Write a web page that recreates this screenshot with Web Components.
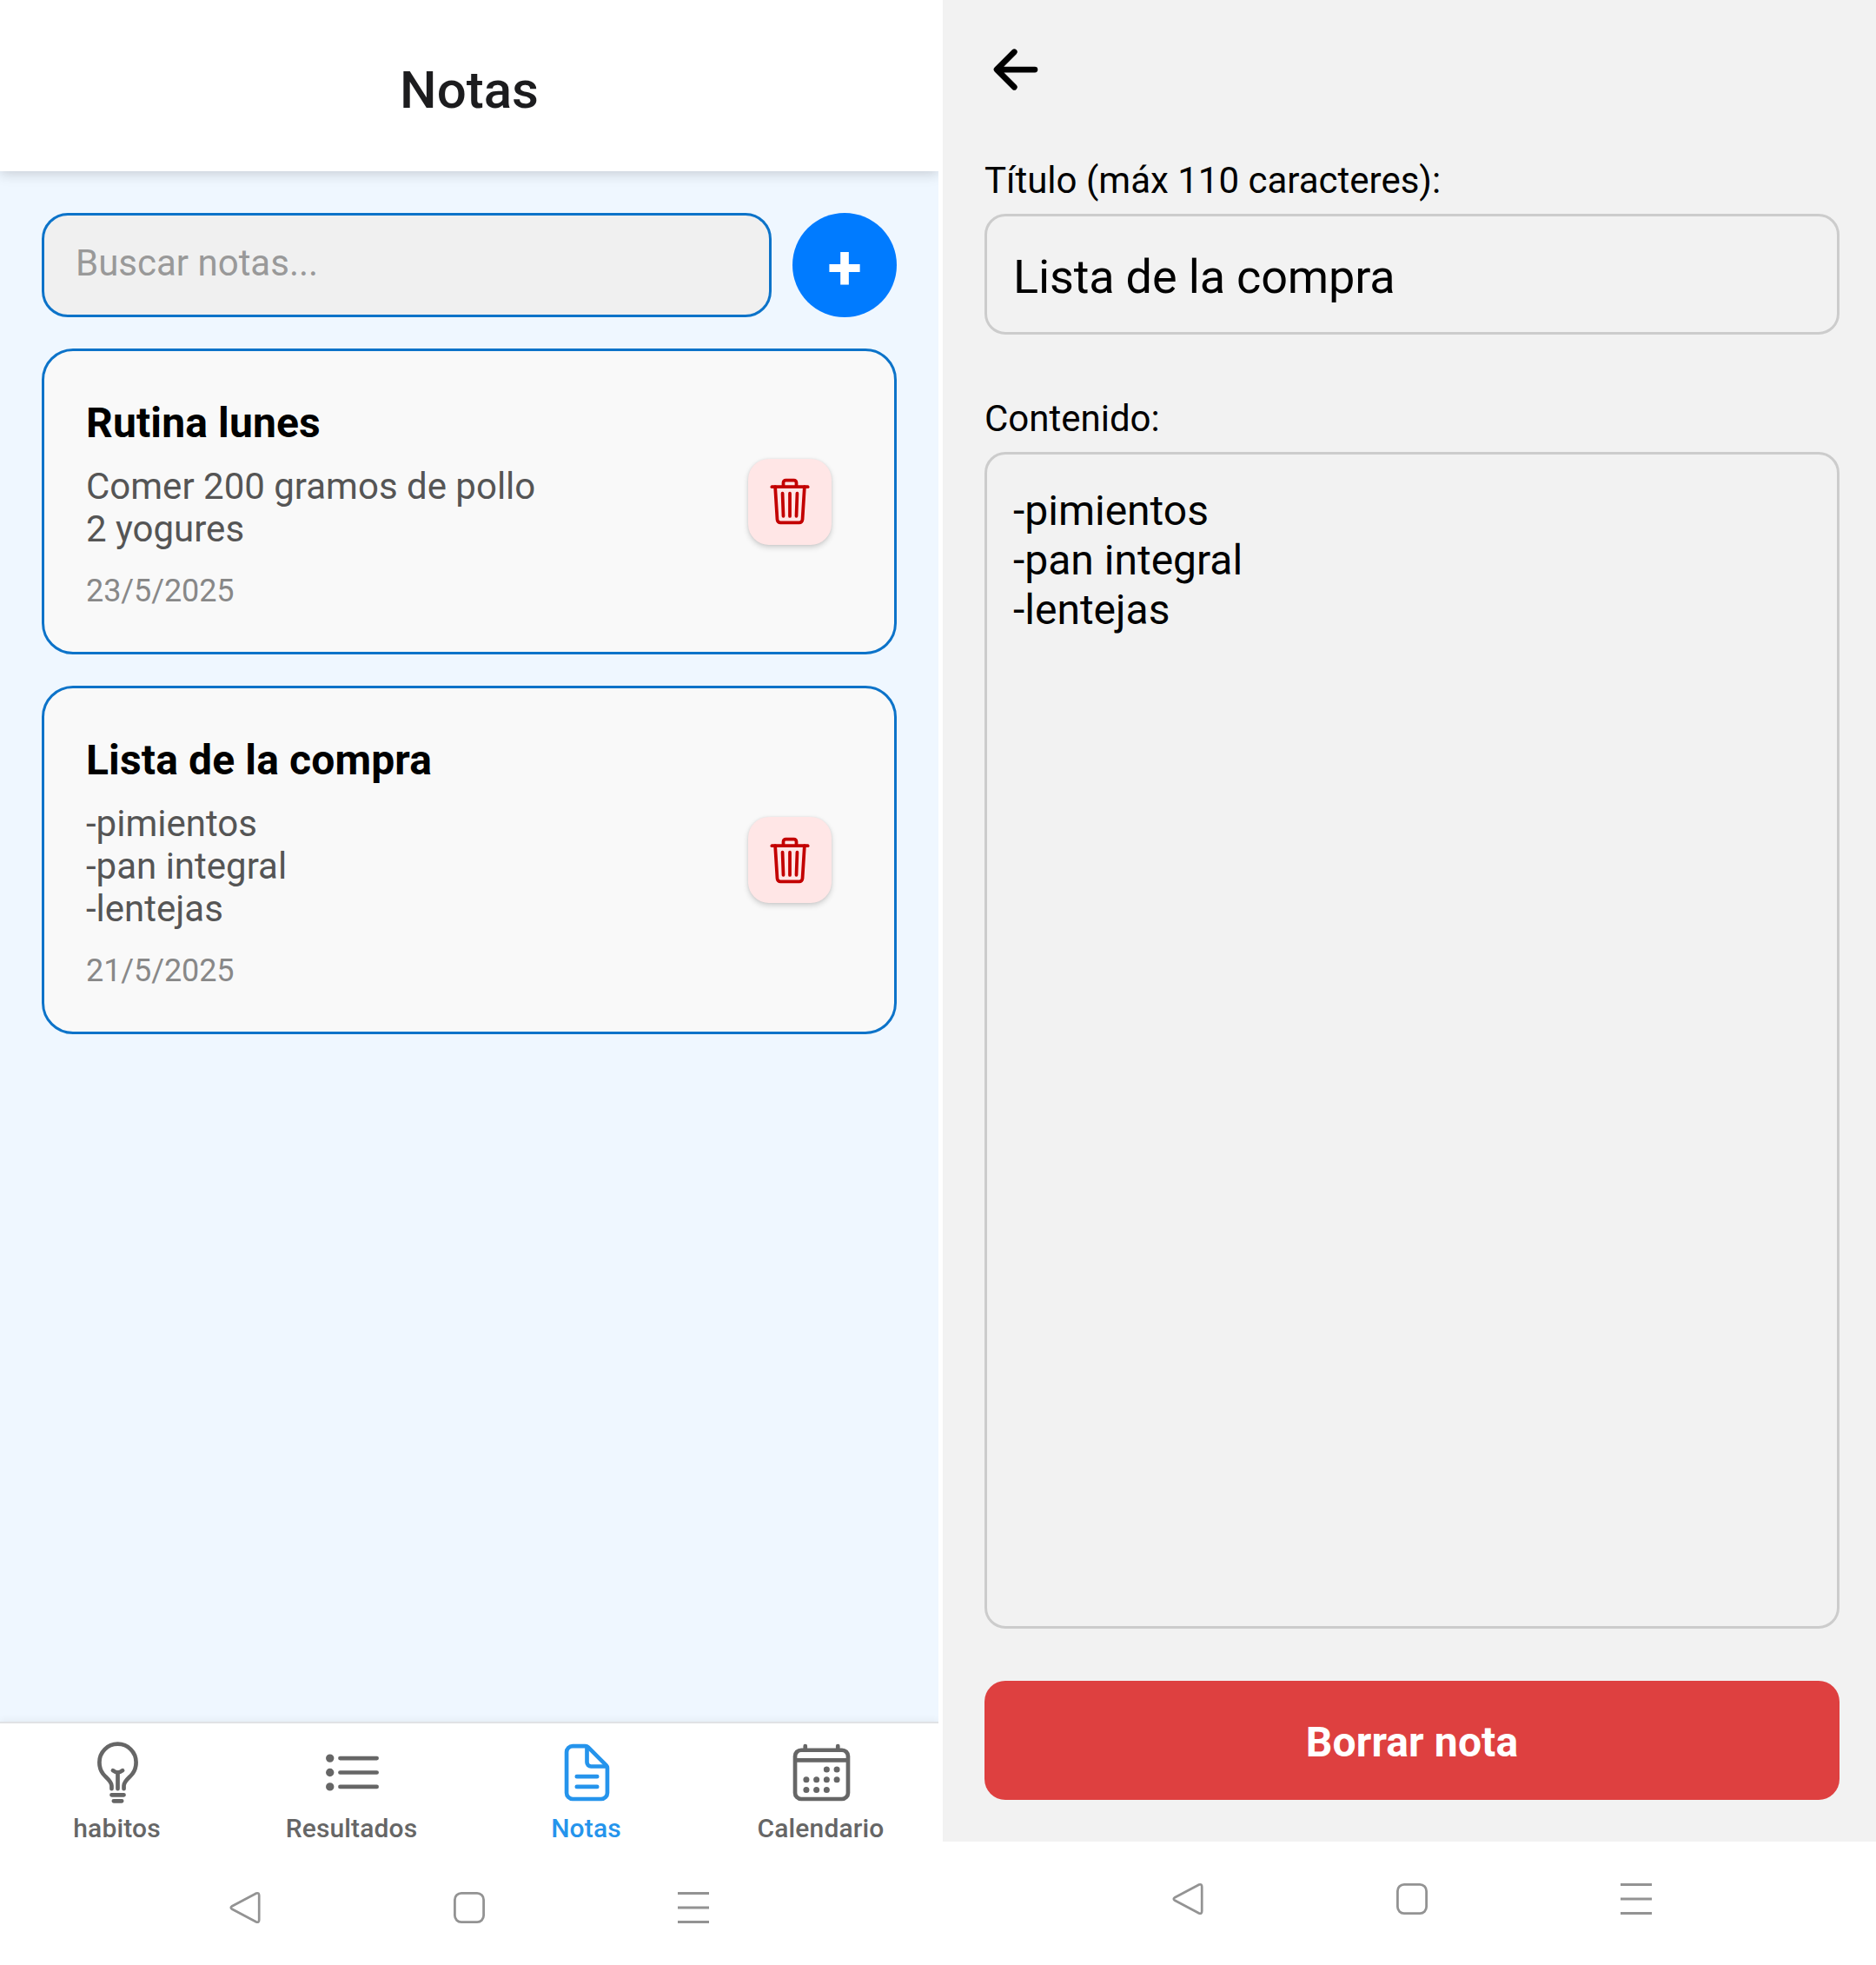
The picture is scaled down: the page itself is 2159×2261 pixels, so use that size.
<!DOCTYPE html>
<html lang="es">
<head>
<meta charset="utf-8">
<title>Notas</title>
<style>
  html, body { margin: 0; padding: 0; background: #fff; }
  body { font-family: Roboto, "Liberation Sans", sans-serif; width: 2159px; height: 2261px; overflow: hidden; }
  .screens { display: flex; gap: 5px; height: 2261px; }
</style>
</head>
<body>
<div class="screens">
  <notes-screen heading="Notas">
    <search-row placeholder="Buscar notas..."></search-row>
    <note-card heading="Rutina lunes" date="23/5/2025">Comer 200 gramos de pollo
2 yogures</note-card>
    <note-card heading="Lista de la compra" date="21/5/2025">-pimientos
-pan integral
-lentejas</note-card>
    <tab-bar slot="tabs">
      <tab-item icon="bulb">habitos</tab-item>
      <tab-item icon="list">Resultados</tab-item>
      <tab-item icon="document" active>Notas</tab-item>
      <tab-item icon="calendar">Calendario</tab-item>
    </tab-bar>
    <system-nav slot="system"></system-nav>
  </notes-screen>
  <editor-screen>
    <text-field label="Título (máx 110 caracteres):" class="title">Lista de la compra</text-field>
    <text-field label="Contenido:" multiline class="content">-pimientos
-pan integral
-lentejas</text-field>
    <danger-button>Borrar nota</danger-button>
    <system-nav slot="system"></system-nav>
  </editor-screen>
</div>

<script>
const ICONS = {
  bulb: '<path d="M304 384v-24c0-29 31.54-56.43 52-76 28.84-27.57 44-64.61 44-108 0-80-63.73-144-144-144a143.6 143.6 0 00-144 144c0 41.84 15.81 81.39 44 108 20.35 19.21 52 46.7 52 76v24M224 480h64M208 432h96M256 384V256"/><path d="M294 240s-21.51 16-38 16-38-16-38-16"/>',
  list: '<path d="M160 144h288M160 256h288M160 368h288"/><circle cx="80" cy="144" r="16"/><circle cx="80" cy="256" r="16"/><circle cx="80" cy="368" r="16"/>',
  document: '<path d="M416 221.25V416a48 48 0 01-48 48H144a48 48 0 01-48-48V96a48 48 0 0148-48h98.75a32 32 0 0122.62 9.37l141.26 141.26a32 32 0 019.37 22.62z"/><path d="M256 56v120a32 32 0 0032 32h120M176 288h160M176 368h160"/>',
  calendar: '<rect x="48" y="80" width="416" height="384" rx="48"/><g fill="currentColor" stroke="none"><circle cx="296" cy="232" r="24"/><circle cx="376" cy="232" r="24"/><circle cx="296" cy="312" r="24"/><circle cx="376" cy="312" r="24"/><circle cx="136" cy="312" r="24"/><circle cx="216" cy="312" r="24"/><circle cx="136" cy="392" r="24"/><circle cx="216" cy="392" r="24"/><circle cx="296" cy="392" r="24"/></g><path d="M128 48v32M384 48v32"/><path d="M464 160H48" stroke-linecap="butt"/>',
  trash: '<path d="M112 112l20 320c.95 18.49 14.4 32 32 32h184c17.67 0 30.87-13.51 32-32l20-320"/><path d="M80 112h352"/><path d="M192 112V72h0a23.93 23.93 0 0124-24h80a23.93 23.93 0 0124 24h0v40M256 176v224M184 176l8 224M328 176l-8 224"/>',
  back: '<path stroke-width="48" d="M244 400L100 256l144-144M120 256h292"/>'
};

const define = (name, render) => customElements.define(name, class extends HTMLElement {
  connectedCallback() {
    if (this.shadowRoot) return;
    this.attachShadow({ mode: 'open' }).innerHTML = render(this);
  }
});

define('line-icon', el => `
  <style>
    :host { display: block; flex: none; width: var(--icon-size, 75px); height: var(--icon-size, 75px); }
    svg { display: block; width: 100%; height: 100%; overflow: visible; }
  </style>
  <svg viewBox="0 0 512 512" fill="none" stroke="currentColor" stroke-width="32" stroke-linecap="round" stroke-linejoin="round">${ICONS[el.getAttribute('name')]}</svg>`);

define('notes-screen', el => `
  <style>
    :host { display: flex; flex-direction: column; width: 1080px; height: 2261px; background: #fff; }
    header { box-sizing: border-box; height: 197px; padding-top: 11px; flex: none; display: flex; align-items: center; justify-content: center;
      background: #fff; z-index: 1; box-shadow: 0 3px 14px rgba(0,0,0,.17); clip-path: inset(0 0 -30px 0); }
    h1 { margin: 0; font-size: 60px; line-height: 70px; font-weight: 500; color: #1c1c1e; }
    main { box-sizing: border-box; flex: 1; min-height: 0; padding: 48px; display: flex; flex-direction: column; gap: 36px; background: #eff7ff; }
  </style>
  <header><h1>${el.getAttribute('heading')}</h1></header>
  <main><slot></slot></main>
  <slot name="tabs"></slot>
  <slot name="system"></slot>`);

define('search-row', el => `
  <style>
    :host { display: flex; gap: 24px; height: 120px; flex: none; }
    .field { box-sizing: border-box; flex: 1; display: flex; align-items: center; padding: 0 36px 6px; border: 3px solid #0c73c9; border-radius: 30px;
      background: #f0f0f0; color: #999; font-size: 42px; }
    .add { box-sizing: border-box; width: 120px; height: 120px; padding-top: 7px; border-radius: 50%; background: #007bff; color: #fff; display: flex; align-items: center; justify-content: center;
      font-size: 72px; line-height: 84px; font-weight: 700; }
  </style>
  <div class="field">${el.getAttribute('placeholder')}</div>
  <div class="add">+</div>`);

define('note-card', el => `
  <style>
    :host { box-sizing: border-box; flex: none; display: flex; align-items: center; padding: 0 48px; border: 3px solid #0c73c9; border-radius: 36px; background: #f9f9f9; }
    .body { flex: 1; padding: 54px 0 49px; }
    h2 { margin: 0 0 20px; font-size: 48px; line-height: 57px; font-weight: 700; letter-spacing: .14px; color: #000; }
    .text { font-size: 42px; line-height: 49px; color: #555; white-space: pre-line; }
    .date { margin-top: 26px; font-size: 36px; line-height: 42px; letter-spacing: -.1px; color: #888; }
    .delete { --icon-size: 60px; flex: none; width: 96px; height: 99px; margin-right: 24px; border-radius: 24px; display: flex; align-items: center; justify-content: center;
      background: #ffe6e6; color: #c30000; box-shadow: 0 3px 6px rgba(0,0,0,.17), 0 0 3px rgba(0,0,0,.08); }
  </style>
  <div class="body">
    <h2>${el.getAttribute('heading')}</h2>
    <div class="text"><slot></slot></div>
    <div class="date">${el.getAttribute('date')}</div>
  </div>
  <div class="delete"><line-icon name="trash"></line-icon></div>`);

define('tab-bar', () => `
  <style>
    :host { box-sizing: border-box; flex: none; display: flex; height: 148px; padding-top: 19px; border-top: 2px solid #e0e2e5; background: #fff;
      box-shadow: 0 -1px 9px rgba(0,0,0,.06); clip-path: inset(-20px 0 0 0); }
  </style>
  <slot></slot>`);

define('tab-item', el => `
  <style>
    :host { flex: 1; display: flex; flex-direction: column; align-items: center; gap: 9px; color: #666; font-size: 30px; line-height: 35px; font-weight: 500; }
    :host([active]) { color: #2594ec; }
    span { letter-spacing: .15px; margin-right: 1px; }
  </style>
  <line-icon name="${el.getAttribute('icon')}"></line-icon>
  <span><slot></slot></span>`);

define('system-nav', () => `
  <style>
    :host { flex: none; display: flex; align-items: center; justify-content: center; gap: 222px; height: 132px; color: #939393; background: #fff; }
    svg { display: block; width: 36px; height: 36px; overflow: visible; }
  </style>
  <svg viewBox="0 0 36 36" fill="none" stroke="currentColor" stroke-width="2.7" stroke-linejoin="round"><path d="M3.2 16.2L31 1.5Q34.2 .4 34.2 4V32Q34.2 35.6 31 34.5L3.2 19.8Q.3 18 3.2 16.2Z"/></svg>
  <svg viewBox="0 0 36 36" fill="none" stroke="currentColor" stroke-width="2.8"><rect x="1.4" y="1.4" width="33.2" height="33.2" rx="7.5"/></svg>
  <svg viewBox="0 0 36 36" fill="none" stroke="currentColor" stroke-width="3"><path d="M0 1.5H36M0 18H36M0 34.5H36"/></svg>`);

define('editor-screen', () => `
  <style>
    :host { display: flex; flex-direction: column; width: 1074px; height: 2261px; background: #fff; }
    main { box-sizing: border-box; flex: none; height: 2119px; padding: 44px 42px 48px 48px; display: flex; flex-direction: column; background: #f2f2f2; color: #000; }
    line-icon { --icon-size: 72px; margin-bottom: 67px; }
    ::slotted(system-nav) { padding-left: 6px; }
  </style>
  <main><line-icon name="back"></line-icon><slot></slot></main>
  <slot name="system"></slot>`);

define('text-field', el => `
  <style>
    :host { display: flex; flex-direction: column; gap: 14px; }
    :host(.title) { margin-bottom: 72px; }
    :host(.content) { flex: 1; margin-bottom: 60px; }
    label { font-size: 42px; line-height: 49px; }
    .box { box-sizing: border-box; border: 3px solid #ccc; border-radius: 24px; padding: 7px 30px 0; height: 139px; display: flex; align-items: center;
      font-size: 54px; line-height: 64px; letter-spacing: -.15px; }
    :host([multiline]) .box { height: auto; flex: 1; align-items: flex-start; padding-top: 36px; font-size: 48px; line-height: 57px; letter-spacing: 0; }
    .value { white-space: pre-line; }
  </style>
  <label>${el.getAttribute('label')}</label>
  <div class="box"><div class="value"><slot></slot></div></div>`);

define('danger-button', () => `
  <style>
    :host { flex: none; box-sizing: border-box; height: 137px; padding-top: 4px; border-radius: 24px; background: #de4040; color: #fff;
      display: flex; align-items: center; justify-content: center; font-size: 48px; line-height: 57px; font-weight: 700; letter-spacing: .12px; }
  </style>
  <slot></slot>`);
</script>
</body>
</html>
